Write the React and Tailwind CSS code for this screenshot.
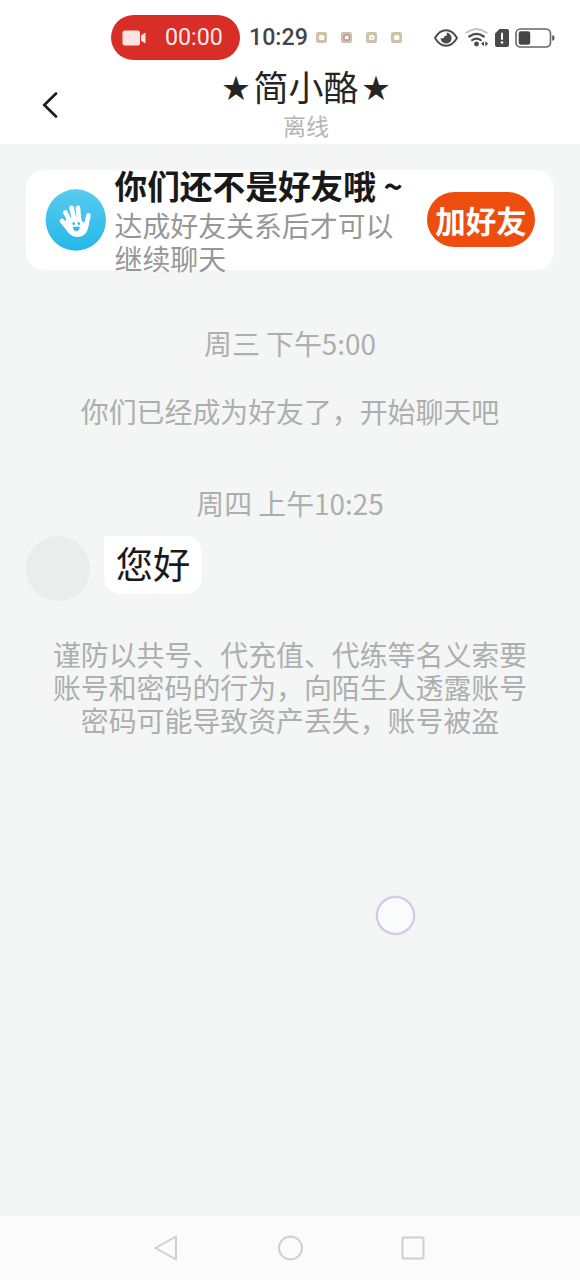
const NOTICE_LINES = [
  '谨防以共号、代充值、代练等名义索要',
  '账号和密码的行为，向陌生人透露账号',
  '密码可能导致资产丢失，账号被盗',
]

const APP_DOTS = [
  { id: 'a', inner: '#fffbe6' },
  { id: 'b', inner: '#fff4f0', ring: '#d9566a' },
  { id: 'c', inner: '#fffdf2', core: '#b9ae94' },
  { id: 'd', inner: '#fffbe6' },
]

function AppDot({ inner, ring, core }) {
  return (
    <svg width="11" height="11" viewBox="0 0 11 11">
      <rect width="11" height="11" rx="2.2" fill="#cbc2ac" />
      <rect x="3" y="3" width="5.4" height="5" rx="1.6" fill={inner} stroke={ring} strokeWidth="1" />
      {core && <circle cx="5.6" cy="5.6" r="0.9" fill={core} />}
    </svg>
  )
}

function StatusBar() {
  return (
    <div className="h-[69px] pt-[15px]">
      <div className="flex h-[45px] items-center pl-[111px] font-[Roboto,sans-serif] text-[23.2px] leading-none">
        <div className="flex h-[45px] w-[129px] items-center rounded-full bg-[#d92d27] pl-[11px] text-[#fdeae8]">
          <svg width="24" height="16" viewBox="0 0 24 16" fill="#fce4e2">
            <rect x="0.5" y="0.5" width="17.5" height="15" rx="2.5" />
            <path d="M19 5.500 22.500 3q1-.5 1 .6v8.800q0 1.100-1 .6L19 10.500Z" />
          </svg>
          <span className="ml-[19px]">00:00</span>
        </div>
        <span className="ml-[9px] w-[67px] font-medium text-[#454545]">10:29</span>
        <div className="flex w-[118px] gap-[14px]">
          {APP_DOTS.map(({ id, ...dot }) => <AppDot key={id} {...dot} />)}
        </div>

        {/* eye */}
        <svg width="24" height="18" viewBox="0 0 24 18" fill="none">
          <path d="M1 9Q5.500 1.300 12 1.300T23 9Q18.500 16.700 12 16.700T1 9Z" stroke="#4a4a4a" strokeWidth="1.900" strokeLinejoin="round" />
          <path d="M12.500 3.600a5.500 5.500 0 1 1-5.900 5.200q1.300 1.300 3 .3 1-.7.7-2.300 2 .6 2.500-.7.300-1.200-.3-2.500Z" fill="#4a4a4a" />
        </svg>

        {/* wifi */}
        <svg className="ml-[7px]" width="24" height="19" viewBox="0 0 24 19" fill="none" strokeLinecap="round">
          <path d="M1.300 4.800Q11.500-2.800 21.700 4.800" stroke="#c6c6c6" strokeWidth="2" />
          <path d="M4.300 8.500q7.200-5.200 14.400 0" stroke="#4a4a4a" strokeWidth="2.200" />
          <path d="M7.200 12.200q4.300-3.200 8.600 0" stroke="#4a4a4a" strokeWidth="2.200" />
          <circle cx="11.500" cy="16" r="2.400" fill="#4a4a4a" />
          <path d="M18.900 13.300v5L16 15.800ZM20.300 13.300v5l2.900-2.500Z" fill="#4a4a4a" />
        </svg>

        {/* sim alert */}
        <svg className="ml-[6px]" width="14" height="18" viewBox="0 0 14 18">
          <path d="M4.500 0H12q2 0 2 2v14q0 2-2 2H2q-2 0-2-2V4.500Z" fill="#4a4a4a" />
          <path d="M7 4.500v5.500" stroke="#fff" strokeWidth="2" strokeLinecap="round" />
          <circle cx="7" cy="13.500" r="1.300" fill="#fff" />
        </svg>

        {/* battery */}
        <svg className="ml-[6px]" width="40" height="20" viewBox="0 0 40 20">
          <rect x="1" y="1" width="34.500" height="18" rx="4.500" fill="none" stroke="#666" strokeWidth="1.600" />
          <rect x="3.700" y="3.300" width="11.500" height="13.400" rx="2.200" fill="#454545" />
          <path d="M37.200 7.200q2.300 0 2.300 2.800t-2.300 2.800Z" fill="#555" />
        </svg>
      </div>
    </div>
  )
}

function Star() {
  return <span className="inline-block w-[35px] align-[3px] text-[27.5px] leading-none">★</span>
}

function ChatHeader() {
  return (
    <header className="flex h-[75px] pr-8">
      <button className="flex w-16 items-center pb-[4px] pl-[42px]" aria-label="返回">
        <svg width="17" height="28" viewBox="0 0 17 28" fill="none" stroke="#1c1c1c" strokeWidth="2.700" strokeLinecap="round">
          <path d="M14 2.500 2.300 14 14 25.500" />
        </svg>
      </button>
      <div className="flex-1 text-center">
        <h1 className="h-[34px] text-[35px] leading-[34px] text-[#252525]"><Star />简小酪<Star /></h1>
        <p className="mt-[10px] text-[23px] leading-[24px] text-[#b5b5b5]">离线</p>
      </div>
    </header>
  )
}

function WaveIcon() {
  return (
    <svg className="shrink-0" width="61" height="62" viewBox="0 0 61 62">
      <defs>
        <linearGradient id="sky" x1="0" y1="0" x2="0" y2="1">
          <stop offset="0" stopColor="#58cbf0" />
          <stop offset="1" stopColor="#25b8e8" />
        </linearGradient>
      </defs>
      <ellipse cx="30.800" cy="31" rx="30.200" ry="30.700" fill="url(#sky)" />
      <g stroke="#fff" strokeWidth="4.700" strokeLinecap="round">
        <path d="M17 32 23 39M20.300 23.500 26 34M26.500 18.800 29.500 32M33 18.800 34 32M43.500 26.500 41 37" />
      </g>
      <path d="M21 31 26 29 36 28Q36.300 33 38.800 33.500L44 30Q44.500 48 31.500 48 24 48 18.500 36Z" fill="#fff" />
      <g fill="#2fbae8">
        <ellipse cx="28.700" cy="34.500" rx="1.300" ry="1.600" />
        <ellipse cx="33.800" cy="34.500" rx="1.300" ry="1.600" />
        <path d="M28 37.800h6.800q0 4.200-3.400 4.200T28 37.800Z" />
      </g>
    </svg>
  )
}

function FriendCard() {
  return (
    <section className="mx-[26px] mt-[26px] flex h-[100px] items-center rounded-[18px] bg-white pl-[19px] pr-[19px]">
      <WaveIcon />
      <div className="ml-[8.5px] w-[312.5px] whitespace-nowrap">
        <h2 className="text-[32.7px] font-bold leading-[39px] text-[#191919]">你们还不是好友哦 ~</h2>
        <p className="mt-[5px] text-[27.9px] leading-[33px] text-[#979797]">
          达成好友关系后才可以<br />继续聊天
        </p>
      </div>
      <button className="mb-px h-[55px] w-[108px] shrink-0 whitespace-nowrap rounded-full bg-[#ed4e0d] text-center text-[30.5px] font-bold leading-[54px] text-white">
        加好友
      </button>
    </section>
  )
}

function SystemText({ className, children }) {
  return (
    <p className={`whitespace-nowrap text-center text-[27.9px] leading-[33px] text-[#adafae] ${className}`}>
      {children}
    </p>
  )
}

function NavBar() {
  return (
    <nav className="flex h-16 items-center justify-between bg-[#fbfbfb] pb-px pl-[154px] pr-[155px]">
      <svg width="24" height="26" viewBox="0 0 24 26" fill="none" stroke="#cfcfcf" strokeWidth="2" strokeLinejoin="round">
        <path d="M22 1.500v23L1.500 13Z" />
      </svg>
      <svg width="26" height="26" viewBox="0 0 26 26" fill="none" stroke="#cfcfcf" strokeWidth="2">
        <circle cx="13.500" cy="13" r="11.500" />
      </svg>
      <svg width="24" height="24" viewBox="0 0 24 24" fill="none" stroke="#cfcfcf" strokeWidth="2">
        <rect x="1.500" y="1.500" width="21" height="21" rx="1" />
      </svg>
    </nav>
  )
}

export default function App() {
  return (
    <div className="relative flex h-[1280px] w-[580px] flex-col overflow-hidden bg-[#f3f6f5] font-['Noto_Sans_CJK_SC',sans-serif]">
      <div className="bg-white">
        <StatusBar />
        <ChatHeader />
      </div>

      <main className="flex-1">
        <FriendCard />
        <SystemText className="mt-[57px]">周三 下午5:00</SystemText>
        <SystemText className="mt-[35px]">你们已经成为好友了，开始聊天吧</SystemText>
        <SystemText className="mt-[59px]">周四 上午10:25</SystemText>

        <div className="mt-[16px] flex pl-[26px]">
          <div className="h-[65px] w-16 rounded-full bg-[#ebeded]" />
          <div className="ml-[14px] h-[58px] w-[98px] rounded-[17px] rounded-tl-[4px] bg-white text-center text-[37.3px] leading-[54px] text-[#1a1a1a]">
            您好
          </div>
        </div>

        <SystemText className="mt-[37px]">
          {NOTICE_LINES.map(line => <span key={line} className="block">{line}</span>)}
        </SystemText>
      </main>

      <NavBar />

      {/* touch indicator */}
      <div className="absolute left-[376px] top-[896px] size-[39px] rounded-full border-[2.5px] border-[#cbcae9] bg-[#fafcfc] shadow-[0_0_2px_#dcdcef]" />
    </div>
  )
}
